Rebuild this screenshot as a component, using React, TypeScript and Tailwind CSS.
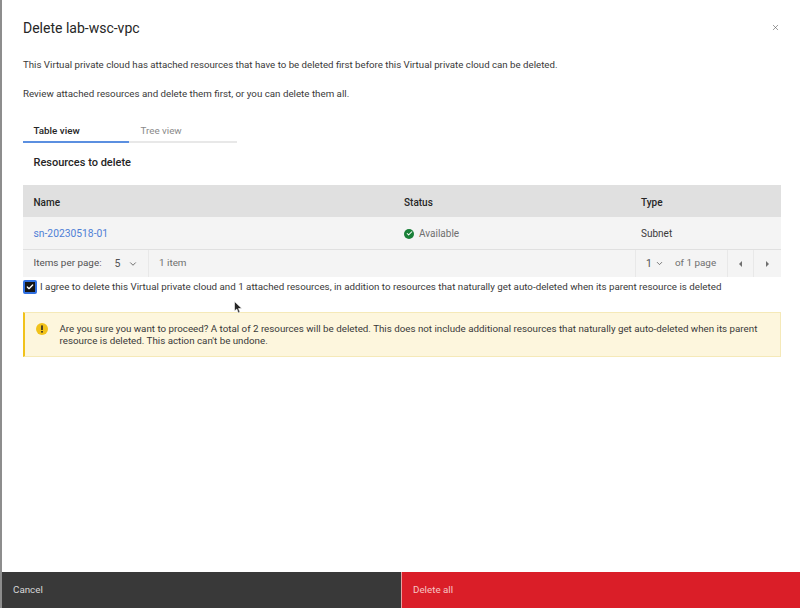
import React from 'react';
import { X, ChevronDown, Check } from 'lucide-react';

const font = { fontFamily: 'Roboto, sans-serif' };

export default function App() {
  return (
    <div className="relative flex h-[608px] w-[800px] overflow-hidden bg-white text-[#262626]" style={font}>
      <div className="w-[1.5px] shrink-0 bg-[#8d8d8d]" />
      <div className="flex min-w-0 flex-1 flex-col">
        <div className="flex flex-1 flex-col pl-[21.5px] pr-[19px]">
          {/* Header */}
          <div className="flex h-[58px] items-center justify-between pb-[3px]">
            <h2 className="text-[14px] leading-none text-[#262626]">Delete lab-wsc-vpc</h2>
            <button className="mr-[1px] text-[#525252]">
              <X size={9} strokeWidth={1.5} />
            </button>
          </div>

          <p className="text-[9.7px] leading-[14px] text-[#393939]">
            This Virtual private cloud has attached resources that have to be deleted first before this Virtual private cloud can be deleted.
          </p>
          <p className="mt-[15px] text-[9.75px] leading-[14px] text-[#393939]">
            Review attached resources and delete them first, or you can delete them all.
          </p>

          {/* Tabs */}
          <div className="mt-[23px] flex w-[214px] text-[9.8px]">
            <div className="h-[19px] w-[106px] border-b-2 border-[#5b8fe0] pl-[10.5px] font-medium leading-[14px] text-[#262626]">Table view</div>
            <div className="h-[19px] w-[108px] border-b-2 border-[#e8e8e8] pl-[11.5px] leading-[14px] text-[#8a8a8a]">Tree view</div>
          </div>

          <h3 className="mt-[12px] pl-[10.5px] text-[11px] font-medium leading-[15px] text-[#262626]">Resources to delete</h3>

          {/* Table */}
          <div className="mt-[15px] text-[10px]">
            <div className="flex h-[32px] items-center bg-[#e0e0e0] pl-[10.5px] pt-[2px] font-medium text-[#262626]">
              <div className="w-[370.5px]">Name</div>
              <div className="w-[237px]">Status</div>
              <div>Type</div>
            </div>
            <div className="flex h-[33px] items-center border-b border-[#e0e0e0] bg-[#f4f4f4] pl-[10.5px] pt-[1px] text-[#393939]">
              <div className="w-[370.5px] text-[10.3px] text-[#4f7fd6]">sn-20230518-01</div>
              <div className="flex w-[237px] items-center gap-[5px] text-[#6f6f6f]">
                <span className="flex h-[10px] w-[10px] items-center justify-center rounded-full bg-[#198038]">
                  <Check size={7} strokeWidth={3.5} className="text-white" />
                </span>
                Available
              </div>
              <div>Subnet</div>
            </div>
            <div className="flex h-[27px] items-center justify-between bg-[#f4f4f4] text-[9.9px] text-[#525252]">
              <div className="flex h-full items-center">
                <div className="flex h-full w-[125.5px] items-center border-r border-[#e8e8e8] pl-[10.5px]">
                  <span>Items per page:</span>
                  <span className="ml-[13px] text-[10.5px]">5</span>
                  <ChevronDown size={10} className="ml-[8px]" />
                </div>
                <span className="ml-[10.5px] text-[#6f6f6f]">1 item</span>
              </div>
              <div className="flex h-full items-center">
                <div className="flex h-full w-[92px] items-center border-l border-[#e8e8e8] pl-[10px]">
                  <span className="text-[10.5px]">1</span>
                  <ChevronDown size={9} className="ml-[3px]" />
                  <span className="ml-[11px] text-[#6f6f6f]">of 1 page</span>
                </div>
                <div className="flex h-full w-[26px] items-center justify-center border-l border-[#e8e8e8]">
                  <span className="h-0 w-0 border-y-[3px] border-r-[3.5px] border-y-transparent border-r-[#6f6f6f]" />
                </div>
                <div className="flex h-full w-[28px] items-center justify-center border-l border-[#e8e8e8]">
                  <span className="h-0 w-0 border-y-[3px] border-l-[3.5px] border-y-transparent border-l-[#6f6f6f]" />
                </div>
              </div>
            </div>
          </div>

          {/* Confirmation */}
          <div className="mt-[3px] flex h-[14px] items-center">
            <span className="flex h-[14px] w-[14px] shrink-0 items-center justify-center rounded-[2px] border-2 border-[#2f6fe0] bg-[#161616]">
              <Check size={8} strokeWidth={4} className="text-white" />
            </span>
            <span className="ml-[3px] whitespace-nowrap pt-[1px] text-[9.78px] text-[#393939]">
              I agree to delete this Virtual private cloud and 1 attached resources, in addition to resources that naturally get auto-deleted when its parent resource is deleted
            </span>
          </div>

          {/* Warning */}
          <div className="mt-[18px] flex h-[45px] items-center border border-l-2 border-[#f5e9b8] border-l-[#f1c21b] bg-[#fdf6dd] pl-[11px]">
            <svg width="12" height="12" viewBox="0 0 12 12" className="mb-[12px] shrink-0">
              <circle cx="6" cy="6" r="6" fill="#f1c21b" />
              <rect x="5.2" y="2.4" width="1.6" height="4.6" fill="#262626" />
              <rect x="5.2" y="8" width="1.6" height="1.6" fill="#262626" />
            </svg>
            <p className="ml-[11.5px] w-[715px] pt-[1px] text-[9.78px] leading-[12px] text-[#393939]">
              Are you sure you want to proceed? A total of 2 resources will be deleted. This does not include additional resources that naturally get auto-deleted when its parent resource is deleted. This action can't be undone.
            </p>
          </div>
        </div>

        {/* Footer */}
        <div className="flex h-[36px] shrink-0 text-[9.8px]">
          <button className="h-full w-[399.5px] bg-[#393939] pl-[11.5px] pt-[1px] text-left text-[#d6d6d6]">Cancel</button>
          <button className="h-full flex-1 border-l border-[#e8a0a0] bg-[#da1e28] pl-[11px] pt-[1px] text-left text-[#f7c4c4]">Delete all</button>
        </div>
      </div>

      {/* Mouse pointer */}
      <svg width="9" height="13" viewBox="0 0 9 13" className="absolute left-[234px] top-[301px]">
        <path d="M0.5 0.5 L0.5 10 L2.8 8 L4.3 12 L6 11.3 L4.5 7.5 L7.8 7.5 Z" fill="#262626" stroke="#fff" strokeWidth="0.6" />
      </svg>
    </div>
  );
}
